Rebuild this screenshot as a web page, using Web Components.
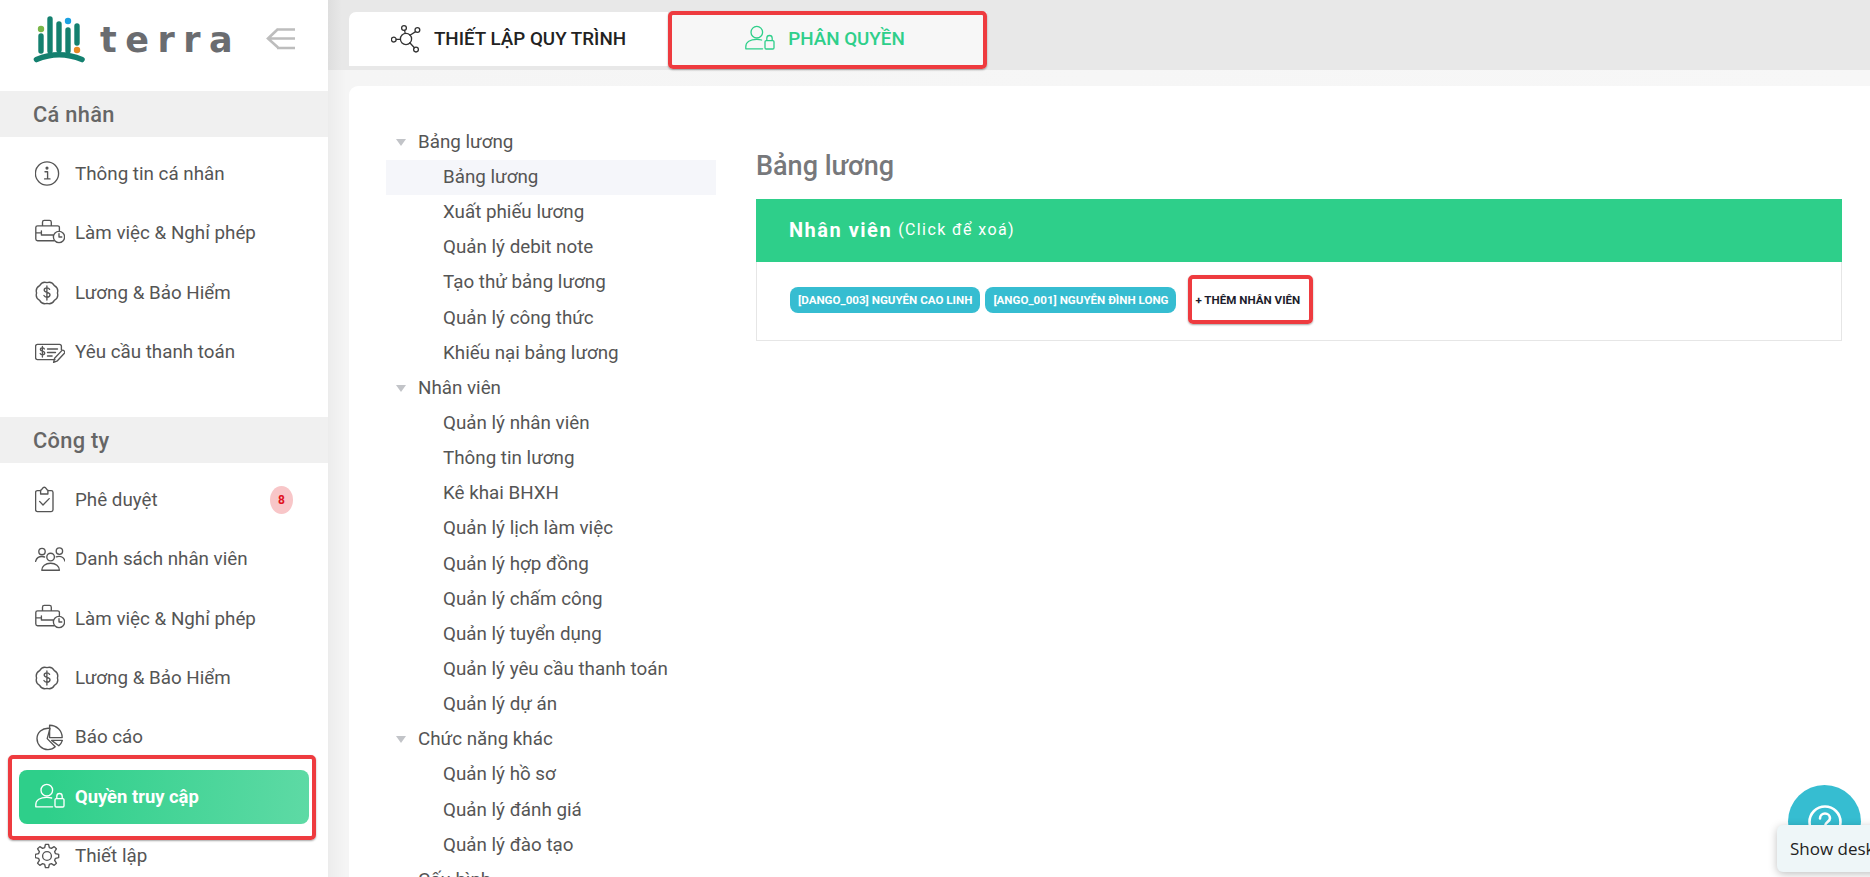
<!DOCTYPE html>
<html lang="vi">
<head>
<meta charset="utf-8">
<title>Terra</title>
<style>
html,body{margin:0;padding:0;height:877px;overflow:hidden;background:#fff;font-family:Roboto,"Liberation Sans",sans-serif;}
</style>
</head>
<body>
<x-app>
  <x-sidebar slot="side">
    <x-side-section title="Cá nhân" style="--after:35px">
      <x-side-item icon="info">Thông tin cá nhân</x-side-item>
      <x-side-item icon="work">Làm việc &amp; Nghỉ phép</x-side-item>
      <x-side-item icon="money">Lương &amp; Bảo Hiểm</x-side-item>
      <x-side-item icon="pay">Yêu cầu thanh toán</x-side-item>
    </x-side-section>
    <x-side-section title="Công ty">
      <x-side-item icon="check" badge="8">Phê duyệt</x-side-item>
      <x-side-item icon="people">Danh sách nhân viên</x-side-item>
      <x-side-item icon="work">Làm việc &amp; Nghỉ phép</x-side-item>
      <x-side-item icon="money">Lương &amp; Bảo Hiểm</x-side-item>
      <x-side-item icon="pie">Báo cáo</x-side-item>
      <x-side-item icon="userlock" active marked>Quyền truy cập</x-side-item>
      <x-side-item icon="gear">Thiết lập</x-side-item>
    </x-side-section>
  </x-sidebar>

  <x-tabs slot="tabs">
    <x-tab icon="network">THIẾT LẬP QUY TRÌNH</x-tab>
    <x-tab icon="userlock" active marked>PHÂN QUYỀN</x-tab>
  </x-tabs>

  <x-card slot="card">
    <x-tree slot="tree">
      <x-tree-group label="Bảng lương">
        <x-tree-node selected>Bảng lương</x-tree-node>
        <x-tree-node>Xuất phiếu lương</x-tree-node>
        <x-tree-node>Quản lý debit note</x-tree-node>
        <x-tree-node>Tạo thử bảng lương</x-tree-node>
        <x-tree-node>Quản lý công thức</x-tree-node>
        <x-tree-node>Khiếu nại bảng lương</x-tree-node>
      </x-tree-group>
      <x-tree-group label="Nhân viên">
        <x-tree-node>Quản lý nhân viên</x-tree-node>
        <x-tree-node>Thông tin lương</x-tree-node>
        <x-tree-node>Kê khai BHXH</x-tree-node>
        <x-tree-node>Quản lý lịch làm việc</x-tree-node>
        <x-tree-node>Quản lý hợp đồng</x-tree-node>
        <x-tree-node>Quản lý chấm công</x-tree-node>
        <x-tree-node>Quản lý tuyển dụng</x-tree-node>
        <x-tree-node>Quản lý yêu cầu thanh toán</x-tree-node>
        <x-tree-node>Quản lý dự án</x-tree-node>
      </x-tree-group>
      <x-tree-group label="Chức năng khác">
        <x-tree-node>Quản lý hồ sơ</x-tree-node>
        <x-tree-node>Quản lý đánh giá</x-tree-node>
        <x-tree-node>Quản lý đào tạo</x-tree-node>
      </x-tree-group>
      <x-tree-group label="Cấu hình" nocaret></x-tree-group>
    </x-tree>
    <x-detail slot="detail" heading="Bảng lương">
      <x-panel>
        <span slot="title">Nhân viên</span>
        <span slot="note">(Click để xoá)</span>
        <x-chip>[DANGO_003] NGUYỄN CAO LINH</x-chip>
        <x-chip>[ANGO_001] NGUYỄN ĐÌNH LONG</x-chip>
        <x-add-button>+ THÊM NHÂN VIÊN</x-add-button>
      </x-panel>
    </x-detail>
  </x-card>
  <x-help slot="over"></x-help>
</x-app>

<script>
const scallop=(cx,cy,r,n,a)=>{let d='';for(let i=0;i<n;i++){const t0=i/n*2*Math.PI,t1=(i+1)/n*2*Math.PI;
 const p=t=>[(cx+r*Math.cos(t)).toFixed(2),(cy+r*Math.sin(t)).toFixed(2)];
 const m=(t0+t1)/2,c=[(cx+(r+a)*Math.cos(m)).toFixed(2),(cy+(r+a)*Math.sin(m)).toFixed(2)];
 d+=(i?'':'M'+p(t0).join(' '))+'Q'+c.join(' ')+' '+p(t1).join(' ');}return d+'Z';};
const gear=(cx,cy,ro,ri,n)=>{let d='';const step=2*Math.PI/n;for(let i=0;i<n;i++){const b=i*step-Math.PI/2;
 const pts=[[ro,b-step*.17],[ro,b+step*.17],[ri,b+step*.34],[ri,b+step*.66]];
 pts.forEach(([r,t],j)=>{d+=((i||j)?'L':'M')+(cx+r*Math.cos(t)).toFixed(2)+' '+(cy+r*Math.sin(t)).toFixed(2);});}return d+'Z';};
const dollar='M15.600 11.400c-.5-1-1.500-1.500-2.700-1.500-1.600 0-2.700.9-2.700 2.200 0 3 5.800 1.600 5.800 4.700 0 1.400-1.200 2.400-3 2.400-1.400 0-2.500-.6-3.100-1.700M12.900 8v14';
const ICONS={
 info:`<circle cx="12" cy="14.500" r="11.600"/><path d="M10 12.700h2.600v7M9.600 19.900h5.400"/><circle cx="12" cy="9.100" r=".9" fill="currentColor"/>`,
 work:`<path d="M19 21.700H2.600A1.800 1.800 0 0 1 .8 20V8.600a1.800 1.800 0 0 1 1.800-1.800h20a1.800 1.800 0 0 1 1.800 1.800v3M7.500 6.600V3.200c0-1 .8-1.800 1.800-1.800h5.200c1 0 1.800.8 1.800 1.800v3.400M.8 13.800h5.600M6.400 16h11.600M6.400 11.800v4.200"/><circle cx="24" cy="18" r="5.600"/><path d="M24 14.600V18h2.800"/>`,
 money:`<path d="${scallop(12,15,10.400,8,2.500)}"/><path d="${dollar}" transform="translate(-1 0)"/>`,
 pay:`<path d="M20 22.600H2.400A1.800 1.800 0 0 1 .6 20.800V9.200a1.800 1.800 0 0 1 1.800-1.800h22.200a1.800 1.800 0 0 1 1.800 1.800v3.600"/><path d="M9.400 12c-.4-.8-1.100-1.100-2-1.100-1.200 0-2 .7-2 1.600 0 2.200 4.300 1.200 4.300 3.500 0 1-.9 1.800-2.200 1.800-1 0-1.900-.4-2.300-1.300M7.400 9.400V20M12.500 12h10M12.500 15.500h8M12.500 19h4.600"/><path d="M18.600 25.400l1-4.200 7.200-7.600a1.400 1.400 0 0 1 2 0l.6.6a1.400 1.400 0 0 1 0 2l-7 7.600z"/>`,
 check:`<path d="M5.600 5.600H2.400A1.800 1.800 0 0 0 .6 7.400v17.400c0 1 .8 1.800 1.800 1.800h13.800c1 0 1.800-.8 1.800-1.800V7.400c0-1-.8-1.800-1.800-1.800h-3.200"/><path d="M5.600 9V5.200c1.600 0 1.600-3 3.700-3s2.100 3 3.600 3V9z"/><path d="M4.600 16.400l3.400 3.600 6.200-6.400"/>`,
 people:`<circle cx="7" cy="6.500" r="3.200"/><circle cx="24.400" cy="6.100" r="3.200"/><circle cx="15.600" cy="12" r="3.800"/><path d="M.6 16.300c.8-3 3.400-4.800 6.400-4.800 1 0 1.800.2 2.600.5M30 16.100c-.8-3-3.200-4.800-6-4.800-1 0-1.900.2-2.700.6M6.800 25.200c0-4 3.600-7 8.800-7s8.800 3 8.800 7z"/>`,
 pie:`<path d="M15 5.400C6.800 4.400 2 10 2 15.600c0 6.200 5 11 11 11 3 0 5.600-1.200 7.200-2.800L12.200 15.600z"/><path d="M14.600 2.200v12.400h12.600C27.200 7.600 21.600 2.200 14.600 2.200z"/><path d="M16.600 17.400h10.800c0 0-1 3.200-3.600 5.400z"/>`,
 userlock:`<circle cx="11.800" cy="8.200" r="5.800"/><path d="M17.600 24.800H.8v-2c0-4.600 4.400-7.400 11-7.400 1.800 0 3.400.2 4.800.6"/><rect x="20" y="16.600" width="9" height="8.400" rx="1.200"/><path d="M21.800 16.400v-2.200a2.700 2.700 0 0 1 5.400 0v2.200"/>`,
 gear:`<path d="${gear(12,15,11.800,8.800,8)}" stroke-linejoin="round"/><circle cx="12" cy="15" r="4.400"/>`,
 network:`<circle cx="15" cy="15" r="5.600"/><circle cx="13" cy="4" r="2.400"/><circle cx="26.400" cy="6" r="2.400"/><circle cx="2.800" cy="15.600" r="2.400"/><circle cx="25" cy="25.600" r="2.400"/><path d="M13.600 6.400l.6 3M24.600 7.600l-5.600 3.600M5.200 15.400h4.200M23.400 23.800l-4.600-5"/>`
};
function shadow(el,html){const r=el.attachShadow({mode:'open'});r.innerHTML=html;return r;}
function svgIcon(name,color,sw){return `<svg viewBox="0 0 30 30" width="30" height="30" fill="none" stroke="${color}" stroke-width="${sw||1.350}" stroke-linecap="round" stroke-linejoin="round" style="color:${color};display:block;flex:none" aria-hidden="true">${ICONS[name]||''}</svg>`;}

class XApp extends HTMLElement{constructor(){super();shadow(this,`<style>
:host{display:flex;width:1870px;height:877px;overflow:hidden;position:relative;background:#f6f6f6}
.main{flex:1;min-width:0;display:flex;flex-direction:column;height:877px;background:linear-gradient(90deg,#ececec 0,#f5f5f5 18px,#f7f7f7 100%)}
.top{height:70px;flex:none;background:linear-gradient(90deg,#dedede 0,#e8e8e8 14px,#e8e8e8 100%)}
.body{flex:1;min-height:0;padding:16px 0 0 21px;display:flex}
</style><slot name="side"></slot><div class="main"><div class="top"><slot name="tabs"></slot></div><div class="body"><slot name="card"></slot></div></div><slot name="over"></slot>`);}}
customElements.define('x-app',XApp);

class XSidebar extends HTMLElement{constructor(){super();shadow(this,`<style>
:host{display:block;width:328px;flex:none;height:877px;background:#fff;overflow:hidden;position:relative;z-index:2}
.logo{height:91px;display:flex;align-items:flex-start;box-sizing:border-box;position:relative}
svg.mark{display:block;flex:none}
.word{font:700 35px/1 "DejaVu Sans",sans-serif;color:#6a6c70;letter-spacing:8.500px;margin:23px 0 0 0;width:166px;flex:none;white-space:nowrap}
.back{margin:27px 0 0 0;display:block;flex:none}
</style><div class="logo">
<svg class="mark" width="100" height="70" viewBox="0 0 100 70" aria-hidden="true" fill="none" stroke-linecap="round"><g stroke="#14806f" stroke-width="5.400"><path d="M41 36v15M50 19v32M59 24v26M68 30v21M77 26v17"/><path d="M36.500 59.500Q59 50 82 59.500" stroke-width="5.600"/></g><circle cx="41" cy="29" r="3.200" fill="#7ab648"/><circle cx="68" cy="21" r="3.200" fill="#1ba1e2"/><circle cx="77" cy="50" r="3.200" fill="#e88a24"/></svg>
<span class="word">terra</span>
<svg class="back" width="30" height="24" viewBox="0 0 30 24" fill="none" stroke="#bdbdbd" stroke-width="2.600" aria-hidden="true"><path d="M12 2L2 11.500l10 9M2 11.500h27M11 2.500h18M11 21h18"/></svg>
</div><slot></slot>`);}}
customElements.define('x-sidebar',XSidebar);

class XSideSection extends HTMLElement{constructor(){super();shadow(this,`<style>
:host{display:block;margin-bottom:var(--after,0)}
.h{height:46px;background:#f0f0f0;display:flex;align-items:center;padding:1px 0 0 33px;box-sizing:border-box;font:500 21.800px/1 Roboto,sans-serif;color:#666;letter-spacing:.3px}
.l{padding-top:7.800px}
</style><div class="h">${this.getAttribute('title')}</div><div class="l"><slot></slot></div>`);this.removeAttribute('title');}}
customElements.define('x-side-section',XSideSection);

class XAnnot extends HTMLElement{constructor(){super();shadow(this,`<style>
:host{display:block;position:absolute;box-sizing:border-box;border:4px solid #ee3b3f;border-radius:5px;box-shadow:0 1px 2px rgba(0,0,0,.35);pointer-events:none;z-index:5}
</style>`);}}
customElements.define('x-annot',XAnnot);

class XSideItem extends HTMLElement{constructor(){super();
 const a=this.hasAttribute('active'),b=this.getAttribute('badge');
 shadow(this,`<style>
:host{display:block;height:59.300px;position:relative;box-sizing:border-box;padding-top:2.600px}
.row{margin:0 19px;height:54px;box-sizing:border-box;padding:0 16px;display:flex;align-items:center;gap:10px;border-radius:8px;font:400 18.800px/1 Roboto,sans-serif;color:#555;white-space:nowrap}
.row.a{background:linear-gradient(95deg,#2ecf8a 0,#2ecf8a 10%,#5edaa5 100%);color:#fff;font-weight:700;font-size:18.400px}
.t{flex:1}
.b{width:23px;height:28px;border-radius:50%;background:#f8c6c8;color:#e0121d;font:700 12px/28px Roboto,sans-serif;text-align:center}
x-annot{left:8px;top:-12px;width:308px;height:85px}
</style><div class="row${a?' a':''}">${svgIcon(this.getAttribute('icon'),a?'#fff':'#555')}<span class="t"><slot></slot></span>${b?`<span class="b">${b}</span>`:''}</div>${this.hasAttribute('marked')?'<x-annot></x-annot>':''}`);}}
customElements.define('x-side-item',XSideItem);

class XTabs extends HTMLElement{constructor(){super();shadow(this,`<style>
:host{display:flex;padding:12px 0 0 21px;height:66px;box-sizing:border-box}
</style><slot></slot>`);}}
customElements.define('x-tabs',XTabs);

class XTab extends HTMLElement{constructor(){super();
 const a=this.hasAttribute('active');
 shadow(this,`<style>
:host{display:block;width:319px;height:54px;position:relative;flex:none}
.t{height:54px;display:flex;align-items:center;justify-content:center;gap:13px;border-radius:7px 0 0 0;background:${a?'#f7f7f7':'#fff'};color:${a?'#2ecf8a':'#222'};font:500 18.800px/1 Roboto,sans-serif;white-space:nowrap;padding-right:${a?5:0}px;box-sizing:border-box}
x-annot{left:0;top:-1px;width:319px;height:58px}
</style><div class="t">${svgIcon(this.getAttribute('icon'),a?'#2ecf8a':'#333',1.300)}<span><slot></slot></span></div>${this.hasAttribute('marked')?'<x-annot></x-annot>':''}`);}}
customElements.define('x-tab',XTab);

class XCard extends HTMLElement{constructor(){super();shadow(this,`<style>
:host{display:flex;flex:1;background:#fff;border-radius:9px 0 0 0;padding:38.700px 28px 0 37px;box-sizing:border-box;min-width:0;gap:40px;height:791px;overflow:hidden}
</style><slot name="tree"></slot><slot name="detail"></slot>`);}}
customElements.define('x-card',XCard);

class XTree extends HTMLElement{constructor(){super();shadow(this,`<style>:host{display:block;width:330px;flex:none}</style><slot></slot>`);}}
customElements.define('x-tree',XTree);

class XTreeGroup extends HTMLElement{constructor(){super();shadow(this,`<style>
:host{display:block}
.g{height:35.150px;display:flex;align-items:center;font:400 18.800px/1 Roboto,sans-serif;color:#555;padding-left:10px}
.c{width:0;height:0;border:5.500px solid transparent;border-top:7px solid #c2c4c8;border-bottom:0;margin-right:12px}
.n .c{visibility:hidden}
</style><div class="g${this.hasAttribute('nocaret')?' n':''}"><span class="c"></span><span>${this.getAttribute('label')}</span></div><slot></slot>`);}}
customElements.define('x-tree-group',XTreeGroup);

class XTreeNode extends HTMLElement{constructor(){super();shadow(this,`<style>
:host{display:flex;align-items:center;height:35.150px;padding-left:57px;font:400 18.800px/1 Roboto,sans-serif;color:#555;white-space:nowrap}
:host([selected]){background:#f5f6fa}
</style><slot></slot>`);}}
customElements.define('x-tree-node',XTreeNode);

class XDetail extends HTMLElement{constructor(){super();shadow(this,`<style>
:host{display:block;flex:1;min-width:0}
h2{margin:0;height:74.300px;box-sizing:border-box;padding-top:27px;font:500 27px/1.100 Roboto,sans-serif;color:#77787b;}
</style><h2>${this.getAttribute('heading')}</h2><slot></slot>`);}}
customElements.define('x-detail',XDetail);

class XPanel extends HTMLElement{constructor(){super();shadow(this,`<style>
:host{display:block;border:1px solid #e6e6e6;box-sizing:border-box;height:142px}
.h{height:63px;background:#2ecf8a;color:#fff;display:flex;align-items:center;padding-left:33px;gap:6px;margin:-1px -1px 0 -1px}
.h ::slotted([slot=title]){font:700 20px/1 Roboto,sans-serif;letter-spacing:1.500px}
.h ::slotted([slot=note]){font:400 16px/1 Roboto,sans-serif;letter-spacing:1.400px}
.b{height:76px;display:flex;align-items:center;padding-left:33px;gap:5px}
</style><div class="h"><slot name="title"></slot><slot name="note"></slot></div><div class="b"><slot></slot></div>`);}}
customElements.define('x-panel',XPanel);

class XChip extends HTMLElement{constructor(){super();shadow(this,`<style>
:host{display:block;height:26px;border-radius:8px;background:#36bdd1;color:#fff;font:700 11.600px/26px Roboto,sans-serif;padding:0 8px;white-space:nowrap}
</style><slot></slot>`);}}
customElements.define('x-chip',XChip);

class XAddButton extends HTMLElement{constructor(){super();shadow(this,`<style>
:host{display:block;position:relative;height:26px;margin-left:14px;font:700 11.600px/26px Roboto,sans-serif;color:#1d1d2c;white-space:nowrap}
x-annot{left:-7px;top:-12px;width:125px;height:49px}
</style><slot></slot><x-annot></x-annot>`);}}
customElements.define('x-add-button',XAddButton);

class XHelp extends HTMLElement{constructor(){super();shadow(this,`<style>
:host{display:block;position:absolute;left:1777px;top:785px;width:93px;height:92px;z-index:6}
.c{position:absolute;left:11px;top:0;width:73px;height:73px;border-radius:50%;background:#36bdd1;display:flex;align-items:center;justify-content:center}
.tip{position:absolute;left:0;top:40px;width:130px;height:47px;box-sizing:border-box;border-radius:6px 0 0 6px;background:#eef6f8;box-shadow:0 2px 8px rgba(0,0,0,.25);padding:0 0 0 13px;font:400 17px/47px "Open Sans",sans-serif;color:#222;white-space:nowrap}
</style><div class="c"><svg width="34" height="34" viewBox="0 0 34 34" fill="none" stroke="#fff" stroke-width="2.600" stroke-linecap="round" aria-hidden="true"><circle cx="17" cy="17" r="15.500"/><path d="M12 13.500c0-3 2.300-5 5-5s5 2 5 4.700c0 3.800-5 4-5 7.800"/><circle cx="17" cy="25.500" r=".7"/></svg></div><div class="tip">Show desktop</div>`);}}
customElements.define('x-help',XHelp);
</script>
</body>
</html>
